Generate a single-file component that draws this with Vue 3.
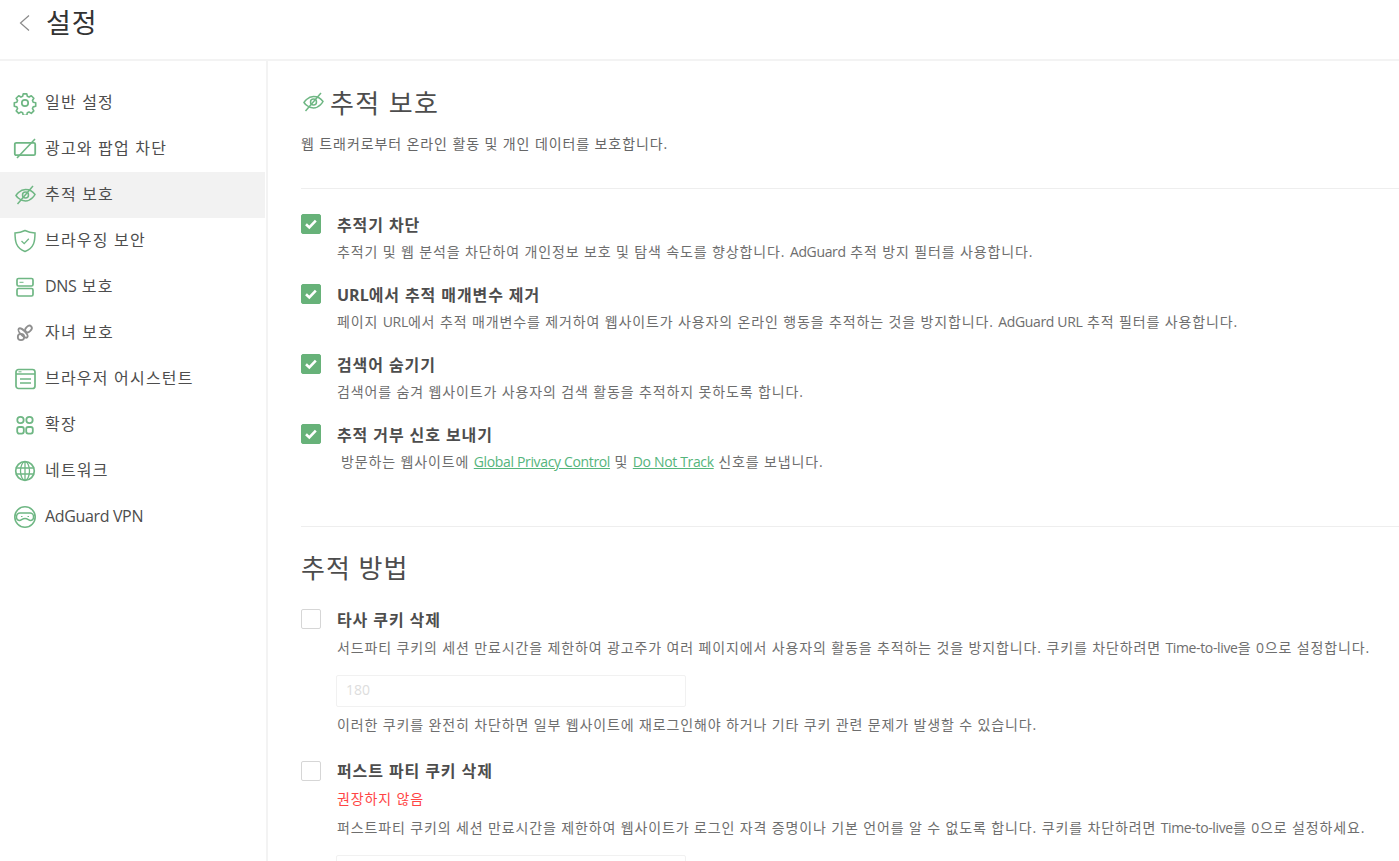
<script setup>
const nav = [
  { label: '일반 설정', icon: 'gear' },
  { label: '광고와 팝업 차단', icon: 'ad' },
  { label: '추적 보호', icon: 'eye', active: true },
  { label: '브라우징 보안', icon: 'shield' },
  { label: 'DNS', after: ' 보호', icon: 'dns', latin: true },
  { label: '자녀 보호', icon: 'kid' },
  { label: '브라우저 어시스턴트', icon: 'browser' },
  { label: '확장', icon: 'ext' },
  { label: '네트워크', icon: 'globe' },
  { label: 'AdGuard VPN', icon: 'vpn', latin: true }
]
</script>

<template>
  <div class="page">
    <header class="topbar">
      <svg class="back" width="14" height="18" viewBox="0 0 14 18"><path d="M12 1.500 3.500 9l8.500 7.500" fill="none" stroke="#8a8a8a" stroke-width="1.200"/></svg>
      <h1 class="page-title">설정</h1>
    </header>
    <div class="body">
      <aside class="sidebar">
        <div v-for="item in nav" :key="item.label" class="nav-item" :class="{ active: item.active }">
          <svg class="nav-icon" width="24" height="24" viewBox="0 0 24 24" fill="none" stroke="#6fb784" stroke-width="1.500">
            <template v-if="item.icon === 'gear'">
              <circle cx="12" cy="12" r="3.200" stroke-width="1.700"/>
              <path d="M10 1.800h4l.6 2.800 1.900.8 2.500-1.500 2.800 2.800-1.500 2.500.8 1.900 2.800.6v4l-2.800.6-.8 1.900 1.500 2.500-2.800 2.800-2.500-1.500-1.900.8-.6 2.800h-4l-.6-2.800-1.900-.8-2.500 1.500-2.800-2.800 1.500-2.500-.8-1.900-2.800-.6v-4l2.800-.6.8-1.900-1.500-2.500 2.800-2.800 2.500 1.500 1.900-.8z" transform="translate(1.200 1.200) scale(.9)" stroke-linejoin="round" stroke-width="1.800"/>
            </template>
            <template v-else-if="item.icon === 'ad'">
              <rect x="1.800" y="5.800" width="20.400" height="12.400" rx="1.500" stroke-width="1.800"/>
              <path d="M22 2 4 21" stroke-width="1.600"/>
            </template>
            <template v-else-if="item.icon === 'eye'">
              <path d="M3 12.500s3.500-6 9.500-6 9.500 5 9.500 5-3.500 6.500-9.500 6.500S3 12.500 3 12.500z"/>
              <circle cx="12.500" cy="12" r="3"/>
              <path d="M20 3 4.500 21"/>
            </template>
            <template v-else-if="item.icon === 'shield'">
              <path d="M12 1.500c3.500 1.700 6.500 2.300 10 2.500 0 8-.8 15-10 18.500C2.800 19 2 12 2 4c3.500-.2 6.500-.8 10-2.500z"/>
              <path d="m8.500 12 2.700 2.600 4.600-4.800" stroke-width="1.300"/>
            </template>
            <template v-else-if="item.icon === 'dns'">
              <rect x="4" y="3.500" width="16" height="7.500" rx="1.500" stroke-width="1.700"/>
              <rect x="4" y="13.500" width="16" height="7.500" rx="1.500" stroke-width="1.700"/>
              <path d="M6.500 7.300h4" stroke-width="1"/>
            </template>
            <template v-else-if="item.icon === 'kid'">
              <g stroke="#8f8f8f" stroke-width="1.800">
                <circle cx="8" cy="16" r="3.200"/>
                <ellipse cx="10" cy="12" rx="6" ry="2.400" transform="rotate(45 10 12)"/>
                <ellipse cx="15.500" cy="8" rx="2.600" ry="3.800" transform="rotate(45 15.500 8)"/>
              </g>
            </template>
            <template v-else-if="item.icon === 'browser'">
              <rect x="3" y="2.500" width="19" height="19" rx="2.500" stroke-width="1.700"/>
              <path d="M3 7h19M7 12h11M7 16h11"/>
              <path d="M5.500 4.800h3" stroke-width="1"/>
            </template>
            <template v-else-if="item.icon === 'ext'">
              <circle cx="7.500" cy="7" r="3.200" stroke-width="1.800"/>
              <circle cx="16.500" cy="7" r="3.200" stroke-width="1.800"/>
              <rect x="4.200" y="14" width="6.600" height="6.600" rx="2" stroke-width="1.800"/>
              <rect x="13.200" y="14" width="6.600" height="6.600" rx="2" stroke-width="1.800"/>
            </template>
            <template v-else-if="item.icon === 'globe'">
              <circle cx="12" cy="12" r="9.300" stroke-width="1.700"/>
              <ellipse cx="12" cy="12" rx="4.500" ry="9.300" stroke-width="1.300"/>
              <path d="M12 2.500v19M2.800 9h18.400M2.800 15h18.400" stroke-width="1.300"/>
            </template>
            <template v-else>
              <circle cx="12" cy="12" r="10.200" stroke-width="1.600"/>
              <path d="M7 8h10a3.500 3.500 0 0 1 3.500 3.500v1a3 3 0 0 1-3 3c-2 0-2.500-2-5.500-2s-3.500 2-5.500 2a3 3 0 0 1-3-3v-1A3.500 3.500 0 0 1 7 8z"/>
              <path d="M8 11.500h1.500M14.500 11.500H16" stroke-width="1"/>
            </template>
          </svg>
          <span class="nav-label" :class="{ 'en-nav': item.icon === 'vpn' }"><span v-if="item.icon === 'dns'" class="en-inline">DNS</span>{{ item.icon === 'dns' ? ' 보호' : item.label }}</span>
        </div>
      </aside>
      <main class="content">
        <div class="heading">
          <svg class="heading-icon" width="24" height="24" viewBox="0 0 24 24" fill="none" stroke="#6fb784" stroke-width="1.500">
            <path d="M3 12.500s3.500-6 9.500-6 9.500 5 9.500 5-3.500 6.500-9.500 6.500S3 12.500 3 12.500z"/>
            <circle cx="12.500" cy="12" r="3"/>
            <path d="M20 3 4.500 21"/>
          </svg>
          <h2 class="h-title">추적 보호</h2>
        </div>
        <p class="lead">웹 트래커로부터 온라인 활동 및 개인 데이터를 보호합니다.</p>
        <div class="divider first"></div>

        <div class="options">
          <div class="option">
            <span class="check on"><svg width="14" height="14" viewBox="0 0 14 14"><path d="m2 7.300 3.300 3.200 6.500-6.800" fill="none" stroke="#fff" stroke-width="2.600"/></svg></span>
            <div class="text">
              <div class="opt-title">추적기 차단</div>
              <div class="opt-desc">추적기 및 웹 분석을 차단하여 개인정보 보호 및 탐색 속도를 향상합니다. <span class="en">AdGuard</span> 추적 방지 필터를 사용합니다.</div>
            </div>
          </div>
          <div class="option">
            <span class="check on"><svg width="14" height="14" viewBox="0 0 14 14"><path d="m2 7.300 3.300 3.200 6.500-6.800" fill="none" stroke="#fff" stroke-width="2.600"/></svg></span>
            <div class="text">
              <div class="opt-title"><span class="en-title">URL</span>에서 추적 매개변수 제거</div>
              <div class="opt-desc">페이지 <span class="en">URL</span>에서 추적 매개변수를 제거하여 웹사이트가 사용자의 온라인 행동을 추적하는 것을 방지합니다. <span class="en">AdGuard URL</span> 추적 필터를 사용합니다.</div>
            </div>
          </div>
          <div class="option">
            <span class="check on"><svg width="14" height="14" viewBox="0 0 14 14"><path d="m2 7.300 3.300 3.200 6.500-6.800" fill="none" stroke="#fff" stroke-width="2.600"/></svg></span>
            <div class="text">
              <div class="opt-title">검색어 숨기기</div>
              <div class="opt-desc">검색어를 숨겨 웹사이트가 사용자의 검색 활동을 추적하지 못하도록 합니다.</div>
            </div>
          </div>
          <div class="option">
            <span class="check on"><svg width="14" height="14" viewBox="0 0 14 14"><path d="m2 7.300 3.300 3.200 6.500-6.800" fill="none" stroke="#fff" stroke-width="2.600"/></svg></span>
            <div class="text">
              <div class="opt-title">추적 거부 신호 보내기</div>
              <div class="opt-desc indent">방문하는 웹사이트에 <a class="link en">Global Privacy Control</a> 및 <a class="link en">Do Not Track</a> 신호를 보냅니다.</div>
            </div>
          </div>
        </div>

        <div class="divider second"></div>
        <h2 class="section">추적 방법</h2>

        <div class="option low">
          <span class="check"></span>
          <div class="text">
            <div class="opt-title">타사 쿠키 삭제</div>
            <div class="opt-desc">서드파티 쿠키의 세션 만료시간을 제한하여 광고주가 여러 페이지에서 사용자의 활동을 추적하는 것을 방지합니다. 쿠키를 차단하려면 <span class="en">Time-to-live</span>을 0으로 설정합니다.</div>
            <input class="ttl" placeholder="180" disabled />
            <div class="opt-desc">이러한 쿠키를 완전히 차단하면 일부 웹사이트에 재로그인해야 하거나 기타 쿠키 관련 문제가 발생할 수 있습니다.</div>
          </div>
        </div>
        <div class="option second-opt">
          <span class="check"></span>
          <div class="text">
            <div class="opt-title">퍼스트 파티 쿠키 삭제</div>
            <div class="warn">권장하지 않음</div>
            <div class="opt-desc">퍼스트파티 쿠키의 세션 만료시간을 제한하여 웹사이트가 로그인 자격 증명이나 기본 언어를 알 수 없도록 합니다. 쿠키를 차단하려면 <span class="en">Time-to-live</span>를 0으로 설정하세요.</div>
            <input class="ttl" disabled />
          </div>
        </div>
      </main>
    </div>
  </div>
</template>

<style>
html, body { margin: 0; height: 100%; overflow: hidden; background: #fff; }
</style>

<style scoped>
.page {
  width: 1399px;
  height: 861px;
  overflow: hidden;
  font-family: "Open Sans", "Noto Sans CJK KR", sans-serif;
  color: #4d4d4d;
  display: flex;
  flex-direction: column;
}
.topbar {
  height: 59px;
  flex: none;
  display: flex;
  align-items: center;
  padding: 0 0 14px 17px;
  box-sizing: border-box;
}
.back { margin-right: 15px; }
.page-title { margin: 0; font-size: 27px; letter-spacing: 1px; font-weight: 400; color: #333; line-height: 36px; }
.body {
  flex: 1;
  display: flex;
  border-top: 2px solid #f3f3f3;
  min-height: 0;
}
.sidebar {
  width: 266px;
  flex: none;
  padding-top: 19px;
  border-right: 2px solid #f3f3f3;
}
.nav-item {
  height: 46px;
  display: flex;
  align-items: center;
  padding-left: 13px;
  gap: 8px;
  margin-right: 1px;
}
.nav-item.active { background: #f2f2f2; }
.nav-icon { flex: none; }
.nav-label { font-size: 16px; letter-spacing: 1.2px; color: #4d4d4d; margin-bottom: 4px; }
.nav-label.en-nav { letter-spacing: -.35px; margin-bottom: 2px; }
.en-inline { letter-spacing: -.35px; }
.content {
  flex: 1;
  padding-left: 33px;
  min-width: 0;
}
.heading { display: flex; align-items: center; height: 40px; margin-top: 21px; gap: 5px; }
.h-title { margin: 0; font-size: 26px; letter-spacing: 1.4px; font-weight: 400; color: #4d4d4d; }
.lead { margin: 12px 0 0; font-size: 14px; letter-spacing: .9px; line-height: 20px; color: #666; }
.divider { height: 1px; background: #eee; }
.divider.first { margin-top: 34px; }
.options { padding-top: 22px; display: flex; flex-direction: column; gap: 15px; }
.option { display: flex; gap: 16px; }
.check {
  width: 20px;
  height: 20px;
  flex: none;
  box-sizing: border-box;
  border: 1px solid #d6d6d6;
  border-radius: 2px;
  display: flex;
  align-items: center;
  justify-content: center;
  margin-top: 3px;
  background: #fff;
}
.check.on { background: #67b279; border-color: #67b279; }
.text { min-width: 0; }
.opt-title { font-size: 16px; letter-spacing: .9px; font-weight: 700; color: #4d4d4d; line-height: 27px; margin-bottom: 1px; }
.options .opt-title { line-height: 28px; margin-bottom: -1px; }
.low .opt-title { line-height: 28px; margin-bottom: 0; }
.en-title { letter-spacing: 0; }
.opt-desc { font-size: 14px; letter-spacing: .87px; line-height: 28px; color: #6e6e6e; white-space: nowrap; }
.en { letter-spacing: -.35px; }
.indent { padding-left: 4px; }
.link { color: #55b57c; text-decoration: underline; }
.divider.second { margin-top: 50px; }
.section { margin: 19px 0 16px; font-size: 26px; letter-spacing: 1px; font-weight: 400; line-height: 44px; color: #4d4d4d; }
.ttl {
  display: block;
  width: 350px;
  height: 32px;
  box-sizing: border-box;
  margin: 13px 0 4px -1px;
  padding: 0 9px 3px;
  border: 1px solid #f1f1f1;
  border-radius: 2px;
  background: #fff;
  font: 14px "Open Sans", sans-serif;
}
.ttl::placeholder { color: #ddd; }
.second-opt { margin-top: 19px; }
.warn { font-size: 14px; letter-spacing: .87px; line-height: 26px; color: #f44; margin-bottom: 2px; }
</style>
